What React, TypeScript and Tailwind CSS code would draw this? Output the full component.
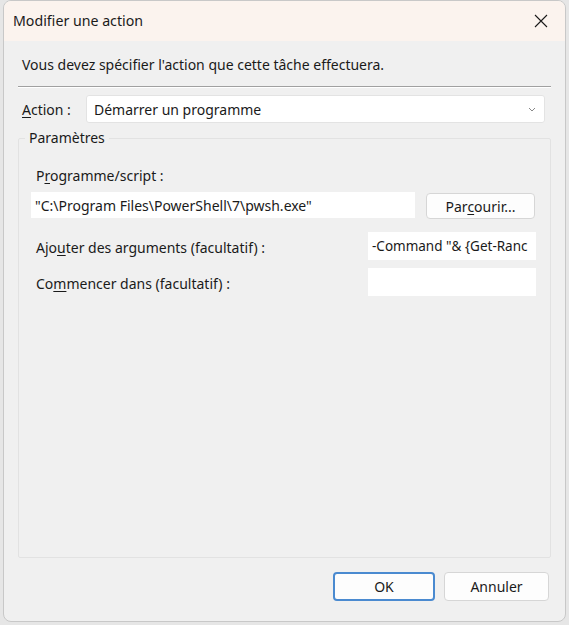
import React from 'react';

function U({ children }: { children: React.ReactNode }) {
  return <span className="underline underline-offset-2">{children}</span>;
}

export default function App() {
  return (
    <div className="w-[569px] h-[625px] bg-[#e6e6e6] flex" style={{ fontFamily: '"Noto Sans", "Open Sans", sans-serif' }}>
      <div className="ml-[3px] mr-[3px] mb-[3px] flex-1 flex flex-col rounded-t-lg rounded-b-lg overflow-hidden border border-[#c8c8c8] bg-[#f0f0f0] text-[#1a1a1a]">
        {/* title bar */}
        <div className="h-[40px] shrink-0 bg-[#fbf3ee] flex items-center justify-between pl-[9px] pr-[14px]">
          <span className="text-[14.2px]">Modifier une action</span>
          <svg width="16" height="16" viewBox="0 0 16 16" className="mr-[2px]">
            <path d="M2 2 L14 14 M14 2 L2 14" stroke="#1a1a1a" strokeWidth="1.1" />
          </svg>
        </div>

        <div className="flex-1 flex flex-col px-[14px] pt-[13px] text-[14px]">
          <p className="pl-[4px] leading-[22px]">Vous devez spécifier l'action que cette tâche effectuera.</p>
          <div className="mt-[10px] h-[2px] border-t border-[#a0a0a0] border-b border-b-white" />

          <div className="mt-[7px] flex items-center">
            <span className="pl-[4px] w-[68px]"><U>A</U>ction :</span>
            <div className="w-[459px] h-[28px] bg-white rounded-[3px] border border-[#e3e3e3] flex items-center justify-between px-[7px]">
              <span>Démarrer un programme</span>
              <svg width="10" height="10" viewBox="0 0 10 10">
                <path d="M2 4 L5 7 L8 4" stroke="#888" strokeWidth="1" fill="none" />
              </svg>
            </div>
          </div>

          {/* group box */}
          <div className="relative mt-[15px] h-[420px] border border-[#e2e2e2] rounded-[2px]">
            <span className="absolute -top-[11px] left-[6px] px-[4px] bg-[#f0f0f0] leading-[20px]">Paramètres</span>
            <div className="flex flex-col pl-[12px] pr-[14px] pt-[27px]">
              <span className="pl-[5px] leading-[20px]">P<U>r</U>ogramme/script :</span>
              <div className="mt-[5px] flex items-center">
                <div className="w-[384px] h-[26px] bg-white flex items-center px-[4px] whitespace-nowrap">
                  "C:\Program Files\PowerShell\7\pwsh.exe"
                </div>
                <button className="ml-[11px] w-[109px] h-[26px] mt-[2px] bg-[#fdfdfd] border border-[#d6d6d6] rounded-[4px]">
                  Par<U>c</U>ourir...
                </button>
              </div>
              <div className="mt-[13px] flex items-center justify-between">
                <span className="pl-[5px] pt-[3px]">Ajo<U>u</U>ter des arguments (facultatif) :</span>
                <div className="w-[168px] h-[28px] bg-white flex items-center px-[4px] overflow-hidden whitespace-nowrap text-[13.5px]">
                  -Command "&amp; {'{'}Get-Ranc
                </div>
              </div>
              <div className="mt-[8px] flex items-center justify-between">
                <span className="pl-[5px] pt-[3px]">Co<U>m</U>mencer dans (facultatif) :</span>
                <div className="w-[168px] h-[28px] bg-white" />
              </div>
            </div>
          </div>

          <div className="mt-[14px] flex justify-end gap-[9px] pr-[2px]">
            <button className="w-[102px] h-[29px] bg-[#fdfdfd] border-2 border-[#4a8ad0] rounded-[4px]">OK</button>
            <button className="w-[105px] h-[29px] bg-[#fdfdfd] border border-[#d6d6d6] rounded-[4px]">Annuler</button>
          </div>
        </div>
      </div>
    </div>
  );
}
